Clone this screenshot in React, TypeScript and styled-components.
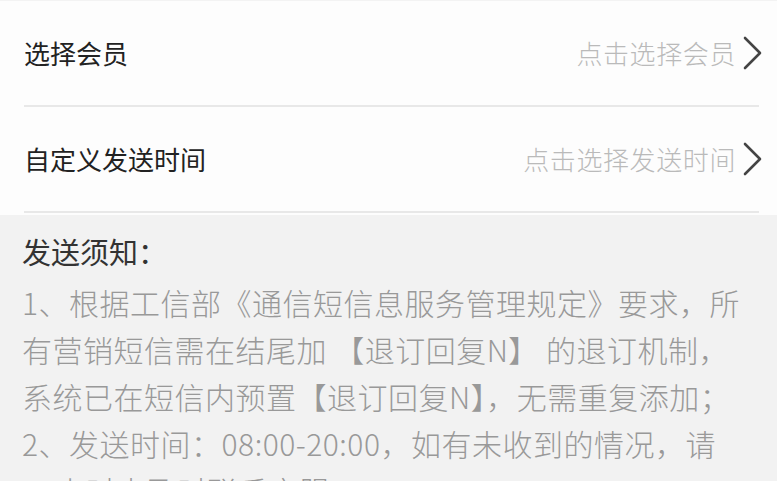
import styled, { createGlobalStyle } from 'styled-components';

const GlobalStyle = createGlobalStyle`
  html, body {
    margin: 0;
    padding: 0;
    background: #f2f2f2;
  }
  body {
    font-family: "Noto Sans CJK SC", "Noto Sans", sans-serif;
  }
`;

const Page = styled.div`
  width: 777px;
  height: 481px;
  overflow: hidden;
  background: #f2f2f2;
`;

const Card = styled.div`
  background: #fdfdfd;
  padding-bottom: 2px;
  border-top: 1px solid #f3f3f3;
`;

const Row = styled.div`
  display: flex;
  align-items: center;
  height: 104px;
  margin: 0 18px 0 24px;
  border-bottom: 2px solid #e8e8e8;
`;

const Label = styled.span`
  flex: 1;
  font-size: 26px;
  color: #222;
  line-height: 1;
`;

const Placeholder = styled.span`
  font-size: 26px;
  font-weight: 300;
  letter-spacing: 0.6px;
  color: #bababa;
  line-height: 1;
  margin-right: 6px;
`;

const Chevron = styled.svg`
  width: 21px;
  height: 34px;
  margin-right: -4px;
  flex-shrink: 0;
`;

const Notice = styled.section`
  padding: 15px 20px 0 22px;
`;

const NoticeTitle = styled.h3`
  margin: 0;
  font-size: 29px;
  font-weight: 400;
  line-height: 42px;
  color: #333;
`;

const NoticeBody = styled.p`
  margin: 7px 0 0;
  font-size: 30px;
  font-weight: 300;
  line-height: 47px;
  letter-spacing: 0.5px;
  color: #999;
`;

const NoBreak = styled.span`
  white-space: nowrap;
`;

const ArrowRight = () => (
  <Chevron viewBox="0 0 21 34">
    <polyline points="3,2 18,17 3,32" fill="none" stroke="#444" strokeWidth="2.6" strokeLinecap="round" strokeLinejoin="round" />
  </Chevron>
);

const rows = [
  { label: '选择会员', hint: '点击选择会员' },
  { label: '自定义发送时间', hint: '点击选择发送时间' },
];

const App = () => (
  <Page>
    <GlobalStyle />
    <Card>
      {rows.map((r) => (
        <Row key={r.label}>
          <Label>{r.label}</Label>
          <Placeholder>{r.hint}</Placeholder>
          <ArrowRight />
        </Row>
      ))}
    </Card>
    <Notice>
      <NoticeTitle>发送须知：</NoticeTitle>
      <NoticeBody>
        1、根据工信部《通信短信息服务管理规定》要求，所有营销短信需在结尾加 【退订回复N】 的退订机制，系统已在短信内预置【退订回复N】，无需重复添加；
        <br />
        2、发送时间：08:00-20:00，如有未收到的情况，请<NoBreak>12小时内</NoBreak>及时联系客服。
      </NoticeBody>
    </Notice>
  </Page>
);

export default App;
